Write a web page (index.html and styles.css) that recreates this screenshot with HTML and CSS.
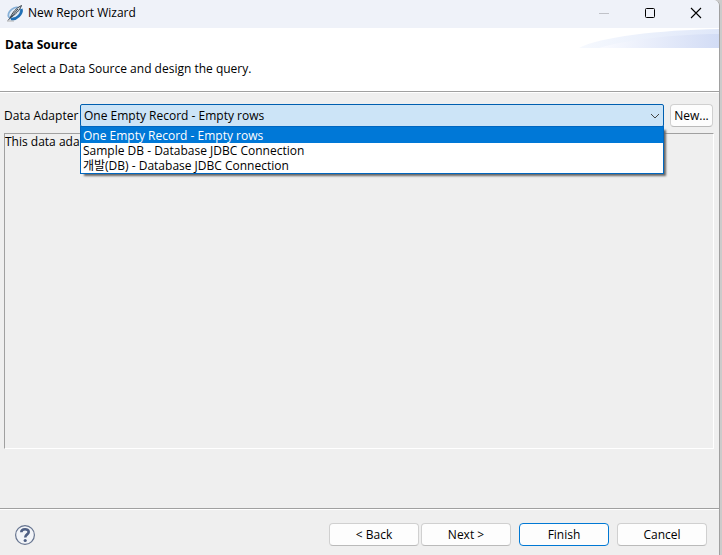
FILE: index.html
```html
<!DOCTYPE html>
<html lang="en">
  <head>
    <meta charset="utf-8">
    <meta name="viewport" content="width=device-width, initial-scale=1">
    <title>New Report Wizard</title>
    <link rel="stylesheet" href="styles.css">
  </head>
  <body>
    <div class="window">

      <div class="titlebar">
        <svg class="app-icon" width="18" height="18" viewBox="0 0 18 18">
          <ellipse cx="8.500" cy="9" rx="7" ry="4.600" transform="rotate(-38 8.500 9)" fill="#e3edf7" stroke="#86b0d8" stroke-width="1.800"/>
          <path d="M15.300 5 C16.800 9.500 10.500 16 5 15" fill="none" stroke="#1f6fb5" stroke-width="2.600"/>
          <path d="M4 14 C6 9 10 4 15.500 1.500 C14 6 9 11 4 14Z" fill="#dfe3e6" stroke="#37424d" stroke-width="1"/>
          <path d="M2 16.500 L12 5" stroke="#37424d" stroke-width="1"/>
          <path d="M1 17 H8" stroke="#b0b0b0" stroke-width="1"/>
        </svg>
        <span class="titlebar-text">New Report Wizard</span>
        <button class="win-btn" aria-label="Minimize" disabled>
          <svg width="12" height="12" viewBox="0 0 12 12"><path d="M1 6.500 H11" stroke="#c0c2c8"/></svg>
        </button>
        <button class="win-btn" aria-label="Maximize">
          <svg width="12" height="12" viewBox="0 0 12 12"><rect x="1.500" y="1.500" width="9" height="9" rx="1" fill="none" stroke="#000"/></svg>
        </button>
        <button class="win-btn" aria-label="Close">
          <svg width="12" height="12" viewBox="0 0 12 12"><path d="M1 1 L11 11 M11 1 L1 11" stroke="#000" stroke-width="1.100"/></svg>
        </button>
      </div>

      <header class="banner">
        <svg class="swoosh" width="140" height="20" viewBox="0 0 140 20">
          <defs>
            <linearGradient id="back"><stop offset="0" stop-color="#f6f9fe"/><stop offset="1" stop-color="#dfe7f9"/></linearGradient>
            <linearGradient id="front"><stop offset="0" stop-color="#fafbff"/><stop offset="1" stop-color="#d2dcf5"/></linearGradient>
          </defs>
          <path d="M0 20 C20 9 80 2 140 1 V20Z" fill="url(#back)"/>
          <path d="M20 20 C50 11 100 6 140 6 V20Z" fill="url(#front)"/>
        </svg>
        <h1>Data Source</h1>
        <p>Select a Data Source and design the query.</p>
      </header>

      <main class="content">
        <div class="adapter-row">
          <label for="adapter">Data Adapter</label>
          <div class="combo">
            <select id="adapter">
              <option>One Empty Record - Empty rows</option>
              <option>Sample DB - Database JDBC Connection</option>
              <option>개발(DB) - Database JDBC Connection</option>
            </select>
            <svg class="chevron" width="10" height="6" viewBox="0 0 10 6"><path d="M1 1 L5 5 L9 1" fill="none" stroke="#444"/></svg>
            <ul class="combo-list" role="listbox" aria-label="Data Adapter">
              <li role="option" aria-selected="true" class="selected">One Empty Record - Empty rows</li>
              <li role="option">Sample DB - Database JDBC Connection</li>
              <li role="option">개발(DB) - Database JDBC Connection</li>
            </ul>
          </div>
          <button class="btn btn-small">New...</button>
        </div>
        <div class="panel">This data adap</div>
      </main>

      <footer class="buttons">
        <button class="help" aria-label="Help">
          <svg width="20" height="20" viewBox="0 0 20 20">
            <circle cx="10" cy="10" r="9.400" fill="#f2f4f8" stroke="#66748f" stroke-width="1.200"/>
            <path d="M6.300 7.300 C6.300 3.300 13.700 3.300 13.700 7 C13.700 9.500 10.200 9.300 10.200 12.600" fill="none" stroke="#4f6084" stroke-width="2.600"/>
            <circle cx="10.200" cy="15.500" r="1.600" fill="#4f6084"/>
          </svg>
        </button>
        <div class="pair">
          <button class="btn">&lt; Back</button>
          <button class="btn">Next &gt;</button>
        </div>
        <button class="btn btn-default">Finish</button>
        <button class="btn">Cancel</button>
      </footer>

    </div>
  </body>
</html>
```
FILE: styles.css
```css
* {
  box-sizing: border-box;
}
html {
  height: 100%;
}
body {
  margin: 0;
  height: 100%;
  padding-right: 2px;
  background: #cbcbcb;
  color: #000;
  font: 12px/16px "Open Sans", "Noto Sans CJK KR", sans-serif;
}
button, select {
  font: inherit;
  color: inherit;
}
.window {
  display: flex;
  flex-direction: column;
  height: 100%;
  background: #efefef;
  border-right: 1px solid #a0a0a0;
  border-top-right-radius: 6px;
  overflow: hidden;
}

/* title bar */
.titlebar {
  display: flex;
  align-items: center;
  height: 28px;
  padding: 0 0 3px 6px;
  background: #eff2f9;
}
.app-icon {
  margin-right: 4px;
}
.titlebar-text {
  flex: 1;
}
.win-btn {
  display: flex;
  align-items: center;
  justify-content: center;
  width: 46px;
  height: 24px;
  padding: 0;
  border: 0;
  background: none;
}

/* banner */
.banner {
  position: relative;
  height: 65px;
  padding: 9px 5px;
  background: #fff;
  border-bottom: 1px solid #fff;
  box-shadow: inset 0 -1px #a0a0a0;
}
.banner h1 {
  margin: 0 0 8px;
  font-size: 12px;
  font-weight: bold;
}
.banner p {
  margin: 0 8px;
}
.swoosh {
  position: absolute;
  top: 0;
  right: 0;
}

/* content */
.content {
  display: flex;
  flex-direction: column;
  flex: 1;
  gap: 6px;
  padding: 11px 5px 59px 4px;
}
.adapter-row {
  display: flex;
  align-items: center;
  padding-right: 1px;
}
.adapter-row label {
  width: 76px;
  white-space: nowrap;
}
.combo {
  position: relative;
  flex: 1;
  margin-right: 6px;
}
.combo select {
  display: block;
  width: 100%;
  height: 23px;
  padding: 0 24px 0 3px;
  border: 1px solid #005fb0;
  border-radius: 2px;
  background: #cce4f7;
  appearance: none;
  outline: none;
}
.chevron {
  position: absolute;
  top: 9px;
  right: 4px;
  pointer-events: none;
}
.combo-list {
  position: absolute;
  top: 22px;
  left: 0;
  right: 0;
  margin: 0;
  padding: 0;
  border: 1px solid #0067c0;
  background: #fff;
  box-shadow: 3px 3px 2px -1px #666;
  list-style: none;
  line-height: 15px;
}
.combo-list li {
  padding: 0 2px;
}
.combo-list .selected {
  padding-top: 1px;
  background: #0078d7;
  color: #fff;
}
.panel {
  flex: 1;
  border: 1px solid #a0a0a0;
  border-right-color: #fff;
  border-bottom-color: #fff;
}

/* buttons */
.btn {
  width: 90px;
  height: 23px;
  padding: 0;
  border: 1px solid #d0d0d0;
  border-bottom-color: #bababa;
  border-radius: 4px;
  background: #fdfdfd;
}
.btn-small {
  width: 43px;
}
.btn-default {
  border-color: #0078d4;
}
.buttons {
  display: flex;
  align-items: center;
  gap: 8px;
  height: 47px;
  padding: 5px 12px 0 15px;
  border-top: 1px solid #a0a0a0;
  box-shadow: inset 0 1px #fff;
}
.pair {
  display: flex;
  gap: 2px;
}
.help {
  display: flex;
  margin-right: auto;
  padding: 0;
  border: 0;
  background: none;
}
```
